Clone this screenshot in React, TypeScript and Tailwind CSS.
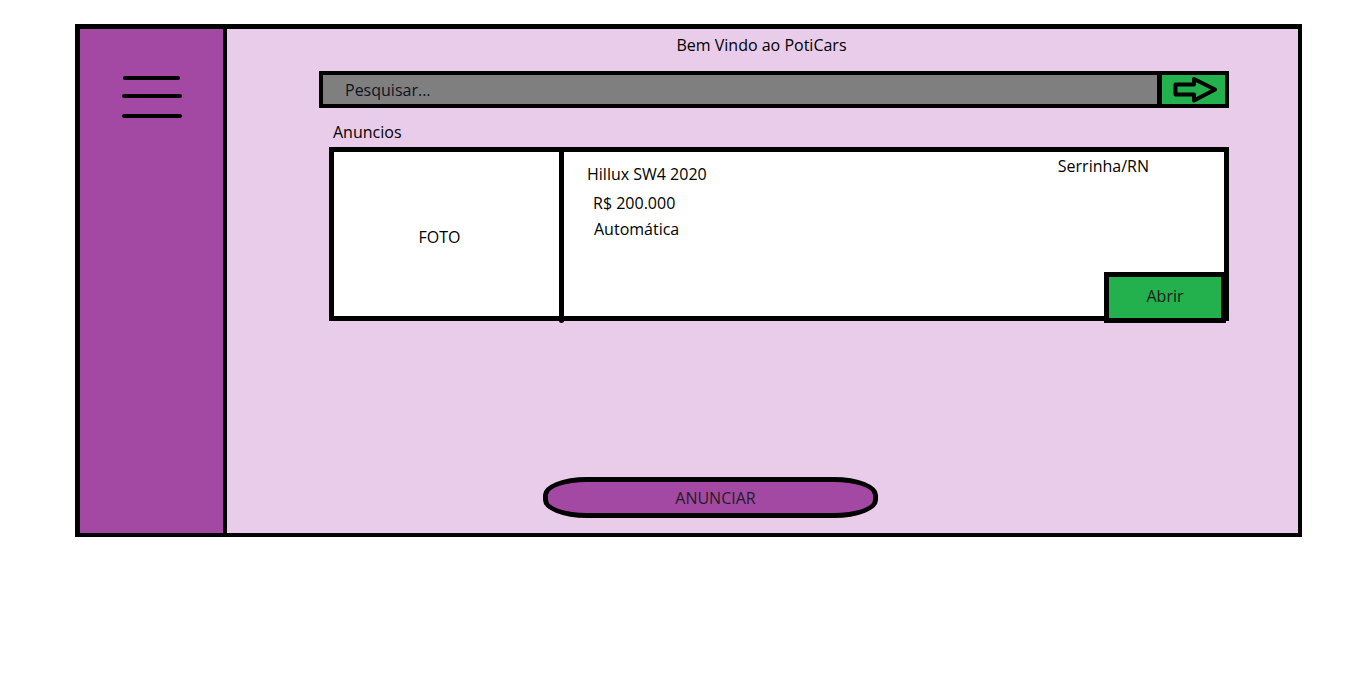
function Hamburger() {
  return (
    <svg width="60" height="44" viewBox="0 0 60 44" className="block">
      <line x1="3" y1="4" x2="56" y2="4" stroke="black" strokeWidth="4" strokeLinecap="round" />
      <line x1="2" y1="22" x2="58" y2="22" stroke="black" strokeWidth="4" strokeLinecap="round" />
      <line x1="2" y1="42" x2="58" y2="42" stroke="black" strokeWidth="4" strokeLinecap="round" />
    </svg>
  )
}

function ArrowIcon() {
  return (
    <svg width="46" height="28" viewBox="0 0 46 28" className="block">
      <polygon
        points="2.5,8.5 21,8.5 21,3 42,13.5 21,24.5 21,18.5 2.5,18.5"
        fill="#22b14c"
        stroke="black"
        strokeWidth="4"
        strokeLinejoin="round"
      />
    </svg>
  )
}

export default function App() {
  return (
    <div
      className="w-[1366px] h-[698px] bg-white pt-[24px] pl-[75px]"
      style={{ fontFamily: '"Open Sans", "Noto Sans", sans-serif' }}
    >
      <div className="flex w-[1227px] h-[513px] border-[5px] border-r-4 border-b-4 border-black">
        {/* sidebar */}
        <aside className="w-[147px] shrink-0 bg-[#a349a4] border-r-4 border-black flex justify-center pt-[45px]">
          <div className="ml-[1px]">
            <Hamburger />
          </div>
        </aside>

        {/* main */}
        <main className="flex-1 bg-[#e9cce9] flex flex-col text-[16px] leading-5 text-black">
          <h1 className="text-center mt-[6px] ml-[-2px]">Bem Vindo ao PotiCars</h1>

          {/* search */}
          <div className="ml-[92px] mt-[16px] w-[910px] h-[37px] border-4 border-black flex">
            <div className="flex-1 bg-[#7f7f7f] flex items-center pl-[22px] text-[#111122]">
              Pesquisar...
            </div>
            <div className="w-[68px] bg-[#22b14c] border-l-[5px] border-black flex items-center justify-center pl-[5px]">
              <ArrowIcon />
            </div>
          </div>

          <div className="ml-[106px] mt-[14px]">Anuncios</div>

          {/* card */}
          <div className="relative ml-[102px] mt-[5px] w-[900px] h-[174px] border-[5px] border-black bg-white flex">
            <div className="w-[225px] shrink-0 flex items-center justify-center">
              <span className="mt-[6px] mr-[14px]">FOTO</span>
            </div>
            <div className="w-[5px] bg-black -mb-[7px] rounded-b-full" />
            <div className="flex-1 flex justify-between">
              <div className="pt-[12px] pl-[23px]">
                <div>Hillux SW4 2020</div>
                <div className="ml-[6px] mt-[9px]">R$ 200.000</div>
                <div className="ml-[7px] mt-[6px]">Automática</div>
              </div>
              <div className="pt-[4px] mr-[75px]">Serrinha/RN</div>
            </div>
            <button className="absolute right-[-2px] bottom-[-7px] w-[122px] h-[51px] border-[5px] border-black bg-[#22b14c] text-[16px] leading-5 text-[#1b1b1b] pb-[3px]">
              Abrir
            </button>
          </div>

          <div className="flex-1" />

          <button className="ml-[316px] mb-[15px] w-[335px] h-[41px] border-[5px] border-black bg-[#a349a4] rounded-[44px/18px] text-[16px] leading-5 text-[#1e1e1e] pl-[10px]">
            ANUNCIAR
          </button>
        </main>
      </div>
    </div>
  )
}
